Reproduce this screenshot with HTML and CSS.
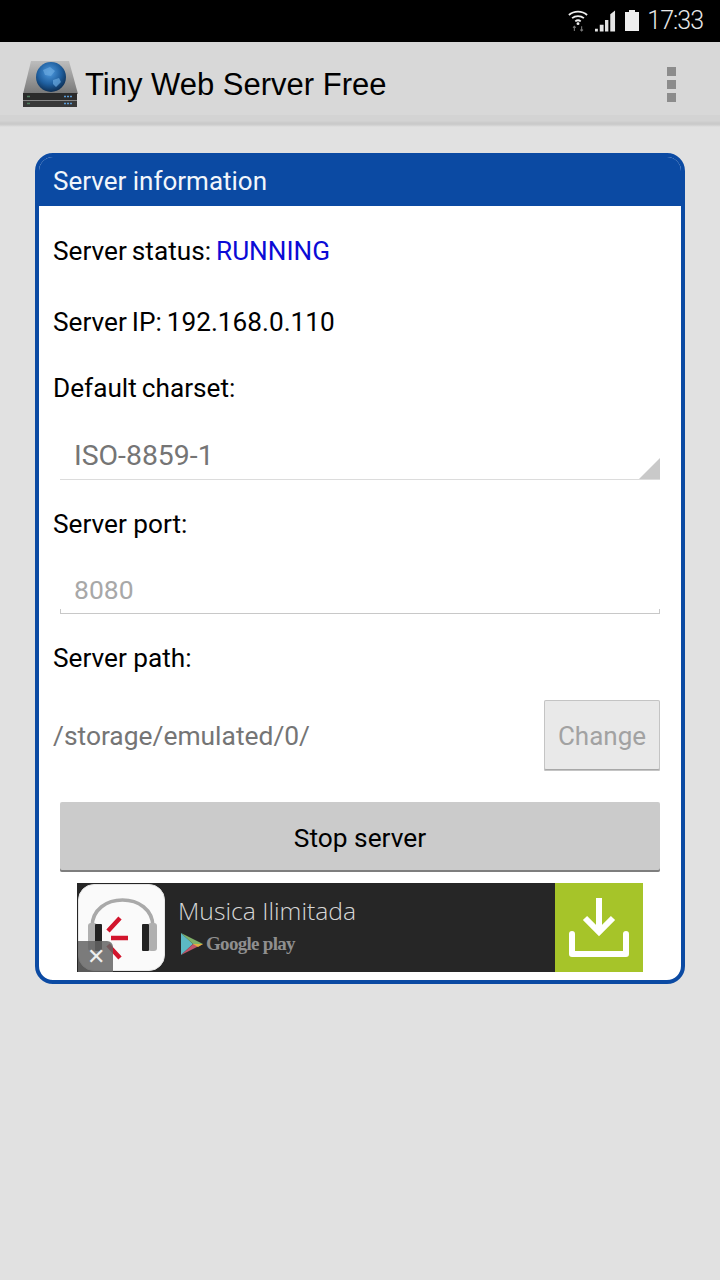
FILE: index.html
```html
<!DOCTYPE html>
<html lang="en">
<head>
<meta charset="utf-8">
<title>Tiny Web Server Free</title>
<link rel="stylesheet" href="styles.css">
</head>
<body>
<div class="statusbar">
  <svg class="st-wifi" width="20" height="24" viewBox="0 0 22 24">
    <path d="M1 6.500C6.500 1.500 15.500 1.500 21 6.500" fill="none" stroke="#eee" stroke-width="2"/>
    <path d="M4.500 10C8 7 14 7 17.500 10" fill="none" stroke="#eee" stroke-width="2"/>
    <path d="M8 13.500C9.800 12 12.200 12 14 13.500" fill="none" stroke="#eee" stroke-width="2"/>
    <circle cx="11" cy="16" r="1.600" fill="#eee"/>
    <path d="M7 19v5M5.500 20.500L7 19l1.500 1.500M15 19v5M13.500 22.500L15 24l1.500-1.500" fill="none" stroke="#777" stroke-width="1.200"/>
  </svg>
  <svg class="st-signal" width="21" height="22" viewBox="0 0 22 22">
    <path d="M0 19h3v3H0zM5 15h4v7H5zM10.500 10H14v12h-3.500zM16 4l5-4v22h-5z" fill="#e4e4e4"/>
  </svg>
  <svg class="st-batt" width="14" height="21" viewBox="0 0 14 21">
    <path d="M4 0h6v2h4v19H0V2h4z" fill="#eee"/>
  </svg>
  <span class="st-time">17:33</span>
</div>
<header class="appbar">
  <svg class="logo" width="56" height="48" viewBox="0 0 56 48">
    <defs>
      <radialGradient id="globe" cx="45%" cy="35%" r="65%">
        <stop offset="0" stop-color="#4f9be0"/>
        <stop offset="0.600" stop-color="#1f5f9f"/>
        <stop offset="1" stop-color="#0d2f55"/>
      </radialGradient>
      <linearGradient id="plate" x1="0" y1="0" x2="0" y2="1">
        <stop offset="0" stop-color="#bdbdbd"/>
        <stop offset="1" stop-color="#777"/>
      </linearGradient>
    </defs>
    <path d="M9 1h38l9 33H1z" fill="url(#plate)"/>
    <path d="M1 33h54v7H1z" fill="#2b2b2b"/>
    <path d="M1 40.500h54V47H1z" fill="#383838"/>
    <path d="M42 36.500h9M42 43.500h9" stroke="#5b9bd5" stroke-width="1.500" stroke-dasharray="2 1"/>
    <path d="M5 36.500h3M5 43.500h3" stroke="#4f7f60" stroke-width="1.500"/>
    <circle cx="29" cy="17" r="15" fill="url(#globe)"/>
    <path d="M21 10l7-3 5 4-4 5-6-1zM31 20l6-2 2 4-5 5-3-3z" fill="#6aa8de" opacity="0.700"/>
  </svg>
  <h1 class="apptitle">Tiny Web Server Free</h1>
  <div class="overflow"><i></i><i></i><i></i></div>
</header>
<div class="appshadow"></div>
<main class="card">
  <div class="card-head">Server information</div>
  <div class="card-body">
    <p class="row row-status tight">Server status: <span class="running">RUNNING</span></p>
    <p class="row row-ip tight">Server IP: 192.168.0.110</p>
    <p class="row row-label tight">Default charset:</p>
    <div class="spinner"><span>ISO-8859-1</span><b class="spin-arrow"></b></div>
    <p class="row row-label2">Server port:</p>
    <div class="portfield"><span>8080</span></div>
    <p class="row row-label3">Server path:</p>
    <div class="pathrow">
      <span class="path">/storage/emulated/0/</span>
      <button class="btn btn-change" type="button">Change</button>
    </div>
    <button class="btn btn-stop" type="button">Stop server</button>
    <div class="ad">
      <div class="ad-icon">
        <svg width="85" height="85" viewBox="0 0 85 85">
          <path d="M13 44V42C13 6 74 6 74 42v2" fill="none" stroke="#a9a9a9" stroke-width="3.500"/>
          <rect x="9" y="38" width="9" height="28" rx="3" fill="#b0b0b0"/>
          <rect x="16" y="39" width="7" height="27" rx="1" fill="#222"/>
          <rect x="69" y="38" width="9" height="28" rx="3" fill="#b0b0b0"/>
          <rect x="63" y="39" width="7" height="27" rx="1" fill="#222"/>
          <path d="M41 33L29 46M32 53h17M29 60l12 13" fill="none" stroke="#d2142c" stroke-width="4.500"/>
        </svg>
      </div>
      <div class="ad-text">
        <div class="ad-title">Musica Ilimitada</div>
        <div class="ad-play">
          <svg width="24" height="26" viewBox="0 0 24 24">
            <path d="M1 1l12 11L1 23z" fill="#5cb8c4"/>
            <path d="M1 1l22 11-10 0z" fill="#7fb069"/>
            <path d="M1 23l22-11-10 0z" fill="#c0566a"/>
            <path d="M13 12h10l-5 3z" fill="#e0b040"/>
          </svg>
          <span>Google play</span>
        </div>
      </div>
      <div class="ad-dl">
        <svg width="62" height="62" viewBox="0 0 62 62">
          <path d="M31 1v30M17 21l14 14 14-14" fill="none" stroke="#fff" stroke-width="6"/>
          <path d="M4 37v20h54V37" fill="none" stroke="#fff" stroke-width="6" stroke-linejoin="round" stroke-linecap="round"/>
        </svg>
      </div>
      <div class="ad-close">✕</div>
    </div>
  </div>
</main>
</body>
</html>
```
FILE: styles.css
```css
* { box-sizing: border-box; }
html, body { margin: 0; padding: 0; }
body {
  width: 720px;
  height: 1280px;
  overflow: hidden;
  background: #e1e1e1;
  font-family: Roboto, "Liberation Sans", sans-serif;
  color: #000;
}
.statusbar {
  height: 42px;
  background: #000;
  display: flex;
  align-items: center;
  justify-content: flex-end;
  padding-right: 17px;
}
.st-wifi { margin-right: 7px; margin-top: -2px; }
.st-signal { margin-right: 9px; margin-top: -1px; }
.st-batt { margin-right: 8px; margin-top: -1px; }
.st-time { color: #e8e8e8; font-size: 25px; font-weight: 300; letter-spacing: -1px; line-height: 42px; }
.appbar {
  height: 73px;
  background: #d8d8d8;
  display: flex;
  align-items: flex-start;
  padding-left: 22px;
}
.logo { margin: 18px 7px 0 0; flex: none; }
.apptitle {
  margin: 23px 0 0;
  font-family: "Liberation Sans", sans-serif;
  font-weight: 400;
  font-size: 31px;
  line-height: 40px;
  flex: 1;
}
.overflow {
  display: flex;
  flex-direction: column;
  gap: 4px;
  margin: 25px 44px 0 0;
}
.overflow i { display: block; width: 9px; height: 9px; background: #8c8c8c; }
.appshadow {
  height: 12px;
  background: linear-gradient(#d3d3d3 0, #d3d3d3 6px, #cdcdcd 7px, #c9c9c9 9px, #cfcfcf 10px, #e1e1e1 12px);
}
.card {
  margin: 26px 35px 0;
  width: 650px;
  height: 831px;
  background: #fff;
  border: 4px solid #0b4aa3;
  border-radius: 18px;
  overflow: hidden;
}
.card-head {
  background: #0b4aa3;
  color: #f2f6fb;
  font-size: 26px;
  line-height: 48px;
  padding-left: 14px;
  margin-top: -4px;
  padding-top: 4px;
  height: 53px;
}
.card-body { padding: 0 21px 0 14px; }
.row { margin: 0; font-size: 26.200px; line-height: 30px; }
.tight { word-spacing: -1.500px; }
.row-status { padding-top: 30px; }
.running { color: #0b0bd6; }
.row-ip { padding-top: 41px; }
.row-label { padding-top: 36px; }
.spinner {
  margin: 19px 0 0 7px;
  height: 58px;
  border-bottom: 1px solid #dcdcdc;
  padding-left: 14px;
  position: relative;
  color: #757575;
  font-size: 28.400px;
  line-height: 68px;
}
.spin-arrow {
  position: absolute;
  right: 0;
  bottom: 0;
  width: 21px;
  height: 21px;
  background: #c9c9c9;
  clip-path: polygon(100% 0, 100% 100%, 0 100%);
}
.row-label2 { padding-top: 29px; }
.portfield {
  margin: 20px 0 0 7px;
  height: 55px;
  border-bottom: 1px solid #c8c8c8;
  padding-left: 14px;
  color: #a8a8a8;
  font-size: 26.500px;
  line-height: 62px;
  position: relative;
}
.portfield::before, .portfield::after {
  content: "";
  position: absolute;
  bottom: 0;
  width: 1px;
  height: 4px;
  background: #c8c8c8;
}
.portfield::before { left: 0; }
.portfield::after { right: 0; }
.row-label3 { padding-top: 29px; }
.pathrow {
  margin-top: 27px;
  display: flex;
  align-items: center;
  justify-content: space-between;
  height: 71px;
}
.path { color: #757575; font-size: 26.400px; }
.btn {
  border: 0;
  border-radius: 2px;
  font-family: Roboto, "Liberation Sans", sans-serif;
}
.btn-change {
  width: 116px;
  height: 71px;
  background: #e9e9e9;
  color: #a2a2a2;
  font-size: 26px;
  box-shadow: inset 0 0 0 1px #c4c4c4, inset 0 -2px 0 #a8a8a8;
  padding: 0;
}
.btn-stop {
  display: block;
  margin: 31px 0 0 7px;
  width: 600px;
  height: 70px;
  background: #cbcbcb;
  color: #000;
  font-size: 26.300px;
  padding: 2px 0 0;
  box-shadow: inset 0 -2px 0 #7e7e7e;
}
.ad {
  margin: 11px 0 0 24px;
  width: 566px;
  height: 89px;
  background: #262626;
  display: flex;
  position: relative;
}
.ad-icon {
  margin: 1px 0 0 1px;
  width: 87px;
  height: 87px;
  flex: none;
  background: #fafafa;
  border-radius: 16px;
  border: 1px solid #e5e5e5;
}
.ad-icon svg { display: block; }
.ad-text { flex: 1; padding: 11px 0 0 13px; }
.ad-title { color: #d6d6d6; font-family: "Open Sans", sans-serif; font-weight: 300; font-size: 24.700px; line-height: 33px; }
.ad-play { display: flex; align-items: center; gap: 2px; margin-top: 4px; padding-left: 2px; }
.ad-play span { color: #8f8f8f; font-family: "Liberation Serif", serif; font-size: 19px; font-weight: 700; letter-spacing: -0.700px; }
.ad-dl {
  width: 88px;
  flex: none;
  background: #a6c429;
  display: flex;
  align-items: center;
  justify-content: center;
}
.ad-close {
  position: absolute;
  left: 1px;
  bottom: 0;
  width: 35px;
  height: 31px;
  background: rgba(100,100,100,0.850);
  color: #eee;
  font-size: 22px;
  line-height: 31px;
  text-align: center;
  border-top-right-radius: 6px;
}
```
